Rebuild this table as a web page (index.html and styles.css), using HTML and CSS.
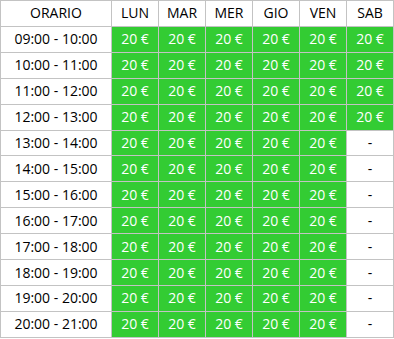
FILE: index.html
```html
<!DOCTYPE html>
<html lang="it">
<head>
<meta charset="utf-8">
<link rel="stylesheet" href="styles.css">
</head>
<body>
<table class="orari">
  <colgroup>
    <col class="col-time">
    <col class="col-day"><col class="col-day"><col class="col-day"><col class="col-day"><col class="col-day"><col class="col-day">
  </colgroup>
  <thead>
    <tr><th>ORARIO</th><th>LUN</th><th>MAR</th><th>MER</th><th>GIO</th><th>VEN</th><th>SAB</th></tr>
  </thead>
  <tbody>
    <tr><td>09:00 - 10:00</td><td class="p">20 €</td><td class="p">20 €</td><td class="p">20 €</td><td class="p">20 €</td><td class="p">20 €</td><td class="p">20 €</td></tr>
    <tr><td>10:00 - 11:00</td><td class="p">20 €</td><td class="p">20 €</td><td class="p">20 €</td><td class="p">20 €</td><td class="p">20 €</td><td class="p">20 €</td></tr>
    <tr><td>11:00 - 12:00</td><td class="p">20 €</td><td class="p">20 €</td><td class="p">20 €</td><td class="p">20 €</td><td class="p">20 €</td><td class="p">20 €</td></tr>
    <tr><td>12:00 - 13:00</td><td class="p">20 €</td><td class="p">20 €</td><td class="p">20 €</td><td class="p">20 €</td><td class="p">20 €</td><td class="p">20 €</td></tr>
    <tr><td>13:00 - 14:00</td><td class="p">20 €</td><td class="p">20 €</td><td class="p">20 €</td><td class="p">20 €</td><td class="p">20 €</td><td>-</td></tr>
    <tr><td>14:00 - 15:00</td><td class="p">20 €</td><td class="p">20 €</td><td class="p">20 €</td><td class="p">20 €</td><td class="p">20 €</td><td>-</td></tr>
    <tr><td>15:00 - 16:00</td><td class="p">20 €</td><td class="p">20 €</td><td class="p">20 €</td><td class="p">20 €</td><td class="p">20 €</td><td>-</td></tr>
    <tr><td>16:00 - 17:00</td><td class="p">20 €</td><td class="p">20 €</td><td class="p">20 €</td><td class="p">20 €</td><td class="p">20 €</td><td>-</td></tr>
    <tr><td>17:00 - 18:00</td><td class="p">20 €</td><td class="p">20 €</td><td class="p">20 €</td><td class="p">20 €</td><td class="p">20 €</td><td>-</td></tr>
    <tr><td>18:00 - 19:00</td><td class="p">20 €</td><td class="p">20 €</td><td class="p">20 €</td><td class="p">20 €</td><td class="p">20 €</td><td>-</td></tr>
    <tr><td>19:00 - 20:00</td><td class="p">20 €</td><td class="p">20 €</td><td class="p">20 €</td><td class="p">20 €</td><td class="p">20 €</td><td>-</td></tr>
    <tr><td>20:00 - 21:00</td><td class="p">20 €</td><td class="p">20 €</td><td class="p">20 €</td><td class="p">20 €</td><td class="p">20 €</td><td>-</td></tr>
  </tbody>
</table>
</body>
</html>
```
FILE: styles.css
```css
html, body {
  margin: 0;
  padding: 0;
  background: #ffffff;
}

.orari {
  border-collapse: collapse;
  table-layout: fixed;
  width: 394px;
  font-family: "Open Sans", "Noto Sans", sans-serif;
  font-size: 14px;
  color: #000000;
}

.orari tr {
  height: 25.92px;
}

.col-time {
  width: 111px;
}

.col-day {
  width: 47px;
}

.orari th,
.orari td {
  border: 1px solid #c3c3c3;
  padding: 0;
  text-align: center;
  vertical-align: middle;
  font-weight: normal;
  line-height: 16px;
}

.orari td.p {
  background: #33cc33;
  color: #ffffff;
}
```
